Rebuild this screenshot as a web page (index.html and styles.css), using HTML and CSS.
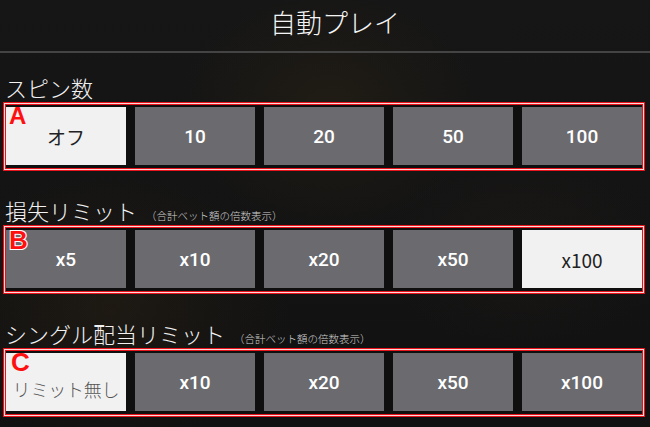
FILE: index.html
```html
<!DOCTYPE html>
<html lang="ja">
<head>
    <meta charset="UTF-8">
    <meta name="viewport" content="width=device-width, initial-scale=1.0">
    <title>自動プレイ</title>
    <link rel="stylesheet" href="styles.css">
</head>
<body>
    <!-- ヘッダー -->
    <div class="header">自動プレイ</div>

    <!-- スピン数 -->
    <div class="section">
        <div class="section-label">スピン数</div>
        <div class="choice-box">
            <span class="mark mark-a">A</span>
            <button class="choice selected">オフ</button>
            <button class="choice">10</button>
            <button class="choice">20</button>
            <button class="choice">50</button>
            <button class="choice">100</button>
        </div>
    </div>

    <!-- 損失リミット -->
    <div class="section">
        <div class="section-label">損失リミット<span class="note">（合計ベット額の倍数表示）</span></div>
        <div class="choice-box">
            <span class="mark mark-b">B</span>
            <button class="choice">x5</button>
            <button class="choice">x10</button>
            <button class="choice">x20</button>
            <button class="choice">x50</button>
            <button class="choice selected">x100</button>
        </div>
    </div>

    <!-- シングル配当リミット -->
    <div class="section">
        <div class="section-label">シングル配当リミット<span class="note">（合計ベット額の倍数表示）</span></div>
        <div class="choice-box">
            <span class="mark mark-c">C</span>
            <button class="choice selected small-text">リミット無し</button>
            <button class="choice">x10</button>
            <button class="choice">x20</button>
            <button class="choice">x50</button>
            <button class="choice">x100</button>
        </div>
    </div>
</body>
</html>
```

FILE: styles.css
```css
body {
    margin: 0;
    padding: 0;
    width: 650px;
    height: 427px;
    overflow: hidden;
    font-family: "Noto Sans CJK JP", "Noto Sans", sans-serif;
    color: #f2f2f2;
    background-color: #131313;
    background-image:
        radial-gradient(ellipse 150px 120px at 330px 110px, rgba(60, 45, 20, 0.3), transparent),
        radial-gradient(ellipse 180px 140px at 110px 310px, rgba(55, 40, 20, 0.3), transparent),
        radial-gradient(ellipse 140px 100px at 520px 250px, rgba(45, 35, 28, 0.25), transparent),
        linear-gradient(#161616, #111);
}

.header {
    height: 51px;
    line-height: 44px;
    padding-left: 20px;
    text-align: center;
    font-size: 26px;
    font-weight: 300;
    color: #f4f4f4;
    border-bottom: 2px solid #444;
}

.section {
    margin-top: 26px;
}

.header + .section {
    margin-top: 21px;
}

.section-label {
    height: 26px;
    line-height: 26px;
    margin: 0 0 2px 5px;
    font-size: 22px;
    font-weight: 300;
    white-space: nowrap;
}

.note {
    margin-left: 9px;
    font-size: 10.5px;
    color: #cfcfcf;
}

/* 選択肢の枠 */
.choice-box {
    position: relative;
    display: flex;
    gap: 9px;
    margin-left: 3px;
    width: 636px;
    height: 58px;
    padding: 4px 2px 5px;
    background: #0f0f0f;
    border: 1px solid #e8141c;
    box-shadow: inset 0 0 0 1px #ffd9d9, inset 0 0 0 2px #e8141c;
}

.choice {
    flex: 0 0 120px;
    height: 58px;
    margin: 0;
    padding: 0;
    border: none;
    border-radius: 0;
    background: #6b6b6f;
    color: #fff;
    font-family: Roboto, "Liberation Sans", sans-serif;
    font-weight: 500;
    font-size: 19px;
}

.choice.selected {
    background: #f1f1f1;
    color: #222;
    font-family: "Noto Sans CJK JP", sans-serif;
    font-weight: 400;
}

.choice.small-text {
    font-size: 18px;
    font-weight: 300;
    color: #555;
    white-space: nowrap;
    letter-spacing: -0.2px;
    padding-top: 14px;
}

/* A B C の目印 */
.mark {
    position: absolute;
    left: 5px;
    top: 3px;
    font-family: "Liberation Sans", Arial, sans-serif;
    font-weight: bold;
    font-size: 24px;
    line-height: 20px;
    color: #ff1010;
}

.mark-b {
    top: 4px;
    font-size: 26px;
    -webkit-text-stroke: 2px #fff;
    paint-order: stroke fill;
}

.mark-c {
    left: 7px;
    top: 0;
    font-size: 26px;
    line-height: 26px;
}
```
